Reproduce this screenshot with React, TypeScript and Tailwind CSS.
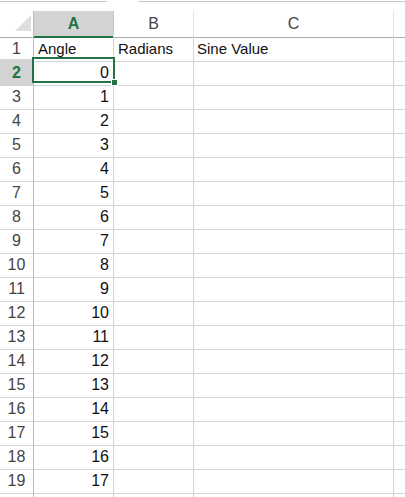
import React from "react";

const rows: { label: string; a: string; b: string; c: string }[] = [
  { label: "1", a: "Angle", b: "Radians", c: "Sine Value" },
  ...Array.from({ length: 18 }, (_, i) => ({ label: String(i + 2), a: String(i), b: "", c: "" })),
  { label: "", a: "", b: "", c: "" },
];

export default function App() {
  return (
    <div
      className="w-[405px] h-[497px] overflow-hidden bg-white text-[15px] text-[#111]"
      style={{ fontFamily: '"Liberation Sans", Arial, sans-serif' }}
    >
      {/* top strip */}
      <div className="flex h-[11px] items-start">
        <div className="mt-[1px] h-[1px] w-[107px] bg-[#c6c6c6]" />
        <div className="w-[31px]" />
        <div className="mt-[1px] h-[1px] flex-1 bg-[#c6c6c6]" />
      </div>

      <div className="relative">
        {/* header row */}
        <div className="grid grid-cols-[34px_80px_80px_200px_1fr] h-[24px]">
          <div className="relative border-r border-b border-r-[#bdbdbd] border-b-[#ababab] bg-white">
            <svg className="absolute left-[15px] top-[4px]" width="16" height="16" viewBox="0 0 16 16">
              <polygon points="16,0 16,16 0,16" fill="#dfdfdf" />
            </svg>
          </div>
          <div className="flex items-center justify-center bg-[#d3d3d3] border-r border-r-[#c6c6c6] border-b-2 border-b-[#217346] font-bold text-[#217346] text-[16px] pt-[1px]">
            A
          </div>
          <div className="flex items-center justify-center border-r border-r-[#e1e1e1] border-b border-b-[#ababab] text-[#444] text-[16px]">
            B
          </div>
          <div className="flex items-center justify-center border-r border-r-[#e1e1e1] border-b border-b-[#ababab] text-[#444] text-[16px]">
            C
          </div>
          <div className="border-b border-b-[#ababab]" />
        </div>

        {/* body rows */}
        {rows.map((r, i) => {
          const sel = r.label === "2";
          return (
            <div key={i} className="grid grid-cols-[34px_80px_80px_200px_1fr] h-[24px]">
              <div
                className={
                  "flex items-center justify-center border-r border-b border-r-[#bdbdbd] border-b-[#d4d4d4] pt-[2px] text-[16px] " +
                  (sel ? "bg-[#d3d3d3] text-[#217346] font-bold" : "text-[#444]")
                }
              >
                {r.label}
              </div>
              <div
                className={
                  "flex items-center border-r border-b border-[#d4d4d4] px-[4px] pt-[2px] " +
                  (i === 0 ? "justify-start" : "justify-end text-[16px]")
                }
              >
                {r.a}
              </div>
              <div className="flex items-center border-r border-b border-[#d4d4d4] px-[4px] pt-[2px]">{r.b}</div>
              <div className="flex items-center border-r border-b border-[#d4d4d4] px-[3px] pt-[2px]">{r.c}</div>
              <div className="border-b border-[#d4d4d4]" />
            </div>
          );
        })}

        {/* selection box */}
        <div className="absolute left-[32px] top-[46px] w-[83px] h-[26px] border-2 border-[#217346]" />
        <div className="absolute left-[111px] top-[68px] w-[7px] h-[7px] bg-white p-[1px]">
          <div className="w-full h-full bg-[#217346]" />
        </div>
      </div>
    </div>
  );
}
